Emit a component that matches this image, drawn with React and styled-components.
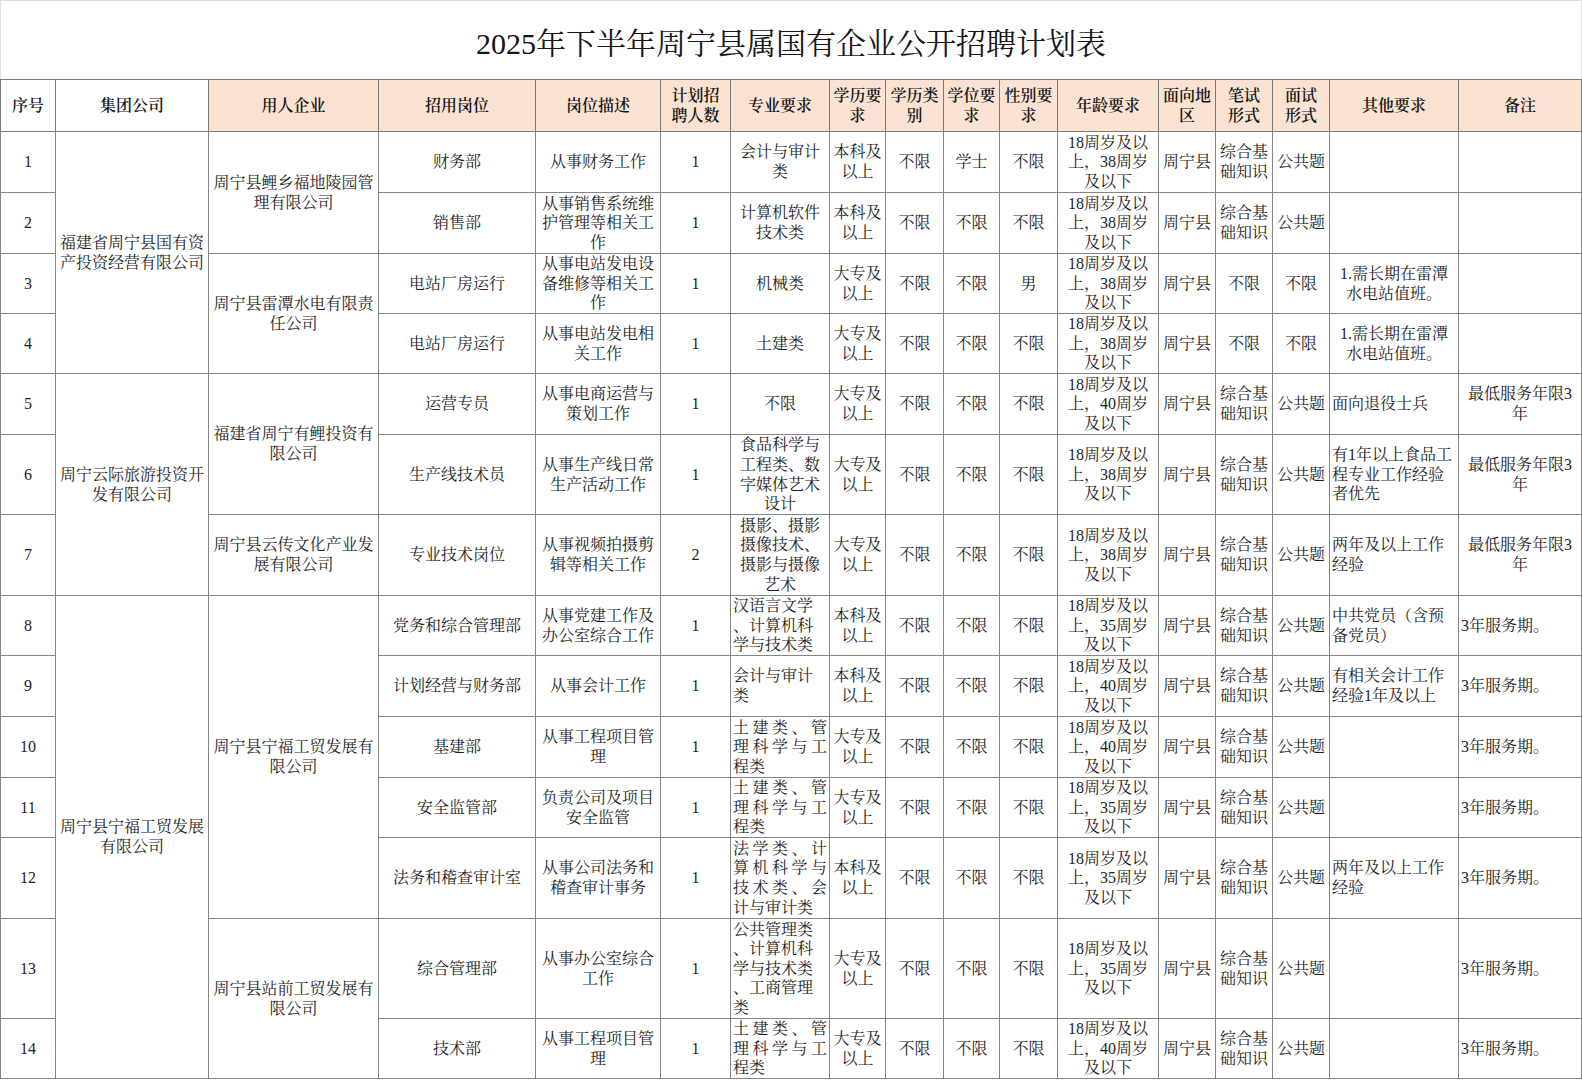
import React from "react";
import styled, { createGlobalStyle } from "styled-components";

const Global = createGlobalStyle`
  html, body { margin: 0; padding: 0; background: #ffffff; }
  body {
    font-family: "Liberation Serif", "Noto Serif CJK SC", "Noto Sans CJK SC", serif;
    color: #1c1c1c;
  }
`;

const Page = styled.div`
  width: 1582px;
  background: #ffffff;
`;

const TitleBar = styled.header`
  height: 78px;
  border-top: 1px solid #dcdcdc;
  border-left: 1px solid #e4e4e4;
  border-right: 1px solid #e4e4e4;
  display: flex;
  align-items: center;
  justify-content: center;
`;

const Title = styled.h1`
  margin: 2px 0 0 0;
  font-size: 30px;
  font-weight: 400;
  letter-spacing: 0;
  color: #151515;
`;

const Table = styled.table`
  width: 1581px;
  table-layout: fixed;
  border-collapse: collapse;
  font-size: 16px;
  line-height: 19.6px;
`;

const Col = styled.col`
  width: ${(p) => p.$w}px;
`;

const HeadRow = styled.tr`
  height: 52px;
`;

const HeadCell = styled.th`
  border: 1px solid #7a7a7a;
  background: ${(p) => (p.$peach ? "#fbe3d4" : "#ffffff")};
  font-weight: 600;
  font-size: 16px;
  line-height: 20px;
  text-align: center;
  vertical-align: middle;
  white-space: pre-line;
  padding: 0 1px;
  color: #161616;
`;

const BodyRow = styled.tr`
  height: ${(p) => p.$h}px;
`;

const Cell = styled.td`
  border: 1px solid #858585;
  padding: 0 ${(p) => (p.$align === "left" ? 2 : 1)}px;
  text-align: ${(p) => p.$align || "center"};
  vertical-align: middle;
  white-space: pre-line;
  font-size: 16px;
  line-height: 19.6px;
  color: #1e1e1e;
  overflow: hidden;
`;

const JustLine = styled.span`
  display: block;
  text-align: left;
  text-align-last: ${(p) => (p.$last ? "left" : "justify")};
`;

const widths = [55, 153, 170, 157, 125, 70, 99, 56, 58, 56, 58, 101, 57, 57, 57, 129, 123];

const headers = [
  ["序号", false],
  ["集团公司", false],
  ["用人企业", true],
  ["招用岗位", true],
  ["岗位描述", true],
  ["计划招\n聘人数", true],
  ["专业要求", true],
  ["学历要\n求", true],
  ["学历类\n别", true],
  ["学位要\n求", true],
  ["性别要\n求", true],
  ["年龄要求", true],
  ["面向地\n区", true],
  ["笔试\n形式", true],
  ["面试\n形式", true],
  ["其他要求", true],
  ["备注", true],
];

const age = (n) => `18周岁及以\n上，${n}周岁\n及以下`;
const BK = "本科及\n以上";
const DZ = "大专及\n以上";
const ZH = "综合基\n础知识";
const TJ = { mode: "justify", lines: ["土建类、管", "理科学与工", "程类"] };
const SVC = { t: "3年服务期。", align: "left" };
const MIN3 = { t: "最低服务年限3\n年", align: "center" };
const EMPTY = { t: "", align: "center" };

const rows = [
  {
    h: 61,
    group: ["福建省周宁县国有资\n产投资经营有限公司", 4],
    company: ["周宁县鲤乡福地陵园管\n理有限公司", 2],
    post: "财务部",
    desc: "从事财务工作",
    n: 1,
    major: { mode: "center", t: "会计与审计\n类" },
    edu: BK, degree: "学士", gender: "不限", age: age(38),
    written: ZH, interview: "公共题", other: EMPTY, note: EMPTY,
  },
  {
    h: 61,
    post: "销售部",
    desc: "从事销售系统维\n护管理等相关工\n作",
    n: 1,
    major: { mode: "center", t: "计算机软件\n技术类" },
    edu: BK, degree: "不限", gender: "不限", age: age(38),
    written: ZH, interview: "公共题", other: EMPTY, note: EMPTY,
  },
  {
    h: 60,
    company: ["周宁县雷潭水电有限责\n任公司", 2],
    post: "电站厂房运行",
    desc: "从事电站发电设\n备维修等相关工\n作",
    n: 1,
    major: { mode: "center", t: "机械类" },
    edu: DZ, degree: "不限", gender: "男", age: age(38),
    written: "不限", interview: "不限",
    other: { t: "1.需长期在雷潭\n水电站值班。", align: "center" }, note: EMPTY,
  },
  {
    h: 60,
    post: "电站厂房运行",
    desc: "从事电站发电相\n关工作",
    n: 1,
    major: { mode: "center", t: "土建类" },
    edu: DZ, degree: "不限", gender: "不限", age: age(38),
    written: "不限", interview: "不限",
    other: { t: "1.需长期在雷潭\n水电站值班。", align: "center" }, note: EMPTY,
  },
  {
    h: 61,
    group: ["周宁云际旅游投资开\n发有限公司", 3],
    company: ["福建省周宁有鲤投资有\n限公司", 2],
    post: "运营专员",
    desc: "从事电商运营与\n策划工作",
    n: 1,
    major: { mode: "center", t: "不限" },
    edu: DZ, degree: "不限", gender: "不限", age: age(40),
    written: ZH, interview: "公共题",
    other: { t: "面向退役士兵", align: "left" }, note: MIN3,
  },
  {
    h: 80,
    post: "生产线技术员",
    desc: "从事生产线日常\n生产活动工作",
    n: 1,
    major: { mode: "center", t: "食品科学与\n工程类、数\n字媒体艺术\n设计" },
    edu: DZ, degree: "不限", gender: "不限", age: age(38),
    written: ZH, interview: "公共题",
    other: { t: "有1年以上食品工\n程专业工作经验\n者优先", align: "left" }, note: MIN3,
  },
  {
    h: 81,
    company: ["周宁县云传文化产业发\n展有限公司", 1],
    post: "专业技术岗位",
    desc: "从事视频拍摄剪\n辑等相关工作",
    n: 2,
    major: { mode: "center", t: "摄影、摄影\n摄像技术、\n摄影与摄像\n艺术" },
    edu: DZ, degree: "不限", gender: "不限", age: age(38),
    written: ZH, interview: "公共题",
    other: { t: "两年及以上工作\n经验", align: "left" }, note: MIN3,
  },
  {
    h: 60,
    group: ["周宁县宁福工贸发展\n有限公司", 7],
    company: ["周宁县宁福工贸发展有\n限公司", 5],
    post: "党务和综合管理部",
    desc: "从事党建工作及\n办公室综合工作",
    n: 1,
    major: { mode: "left", t: "汉语言文学\n、计算机科\n学与技术类" },
    edu: BK, degree: "不限", gender: "不限", age: age(35),
    written: ZH, interview: "公共题",
    other: { t: "中共党员（含预\n备党员）", align: "left" }, note: SVC,
  },
  {
    h: 61,
    post: "计划经营与财务部",
    desc: "从事会计工作",
    n: 1,
    major: { mode: "left", t: "会计与审计\n类" },
    edu: BK, degree: "不限", gender: "不限", age: age(40),
    written: ZH, interview: "公共题",
    other: { t: "有相关会计工作\n经验1年及以上", align: "left" }, note: SVC,
  },
  {
    h: 61,
    post: "基建部",
    desc: "从事工程项目管\n理",
    n: 1,
    major: TJ,
    edu: DZ, degree: "不限", gender: "不限", age: age(40),
    written: ZH, interview: "公共题", other: EMPTY, note: SVC,
  },
  {
    h: 60,
    post: "安全监管部",
    desc: "负责公司及项目\n安全监管",
    n: 1,
    major: TJ,
    edu: DZ, degree: "不限", gender: "不限", age: age(35),
    written: ZH, interview: "公共题", other: EMPTY, note: SVC,
  },
  {
    h: 81,
    post: "法务和稽查审计室",
    desc: "从事公司法务和\n稽查审计事务",
    n: 1,
    major: { mode: "justify", lines: ["法学类、计", "算机科学与", "技术类、会", "计与审计类"] },
    edu: BK, degree: "不限", gender: "不限", age: age(35),
    written: ZH, interview: "公共题",
    other: { t: "两年及以上工作\n经验", align: "left" }, note: SVC,
  },
  {
    h: 100,
    company: ["周宁县站前工贸发展有\n限公司", 2],
    post: "综合管理部",
    desc: "从事办公室综合\n工作",
    n: 1,
    major: { mode: "left", t: "公共管理类\n、计算机科\n学与技术类\n、工商管理\n类" },
    edu: DZ, degree: "不限", gender: "不限", age: age(35),
    written: ZH, interview: "公共题", other: EMPTY, note: SVC,
  },
  {
    h: 60,
    post: "技术部",
    desc: "从事工程项目管\n理",
    n: 1,
    major: TJ,
    edu: DZ, degree: "不限", gender: "不限", age: age(40),
    written: ZH, interview: "公共题", other: EMPTY, note: SVC,
  },
];

function MajorCell({ major }) {
  if (major.mode === "justify") {
    return (
      <Cell $align="left">
        {major.lines.map((l, i) => (
          <JustLine key={i} $last={i === major.lines.length - 1}>
            {l}
          </JustLine>
        ))}
      </Cell>
    );
  }
  return <Cell $align={major.mode}>{major.t}</Cell>;
}

export default function App() {
  return (
    <Page>
      <Global />
      <TitleBar>
        <Title>2025年下半年周宁县属国有企业公开招聘计划表</Title>
      </TitleBar>
      <Table>
        <colgroup>
          {widths.map((w, i) => (
            <Col key={i} $w={w} />
          ))}
        </colgroup>
        <thead>
          <HeadRow>
            {headers.map(([t, peach]) => (
              <HeadCell key={t} $peach={peach}>
                {t}
              </HeadCell>
            ))}
          </HeadRow>
        </thead>
        <tbody>
          {rows.map((r, i) => (
            <BodyRow key={i} $h={r.h}>
              <Cell>{i + 1}</Cell>
              {r.group && <Cell rowSpan={r.group[1]}>{r.group[0]}</Cell>}
              {r.company && <Cell rowSpan={r.company[1]}>{r.company[0]}</Cell>}
              <Cell>{r.post}</Cell>
              <Cell>{r.desc}</Cell>
              <Cell>{r.n}</Cell>
              <MajorCell major={r.major} />
              <Cell>{r.edu}</Cell>
              <Cell>不限</Cell>
              <Cell>{r.degree}</Cell>
              <Cell>{r.gender}</Cell>
              <Cell>{r.age}</Cell>
              <Cell>周宁县</Cell>
              <Cell>{r.written}</Cell>
              <Cell>{r.interview}</Cell>
              <Cell $align={r.other.align}>{r.other.t}</Cell>
              <Cell $align={r.note.align}>{r.note.t}</Cell>
            </BodyRow>
          ))}
        </tbody>
      </Table>
    </Page>
  );
}
